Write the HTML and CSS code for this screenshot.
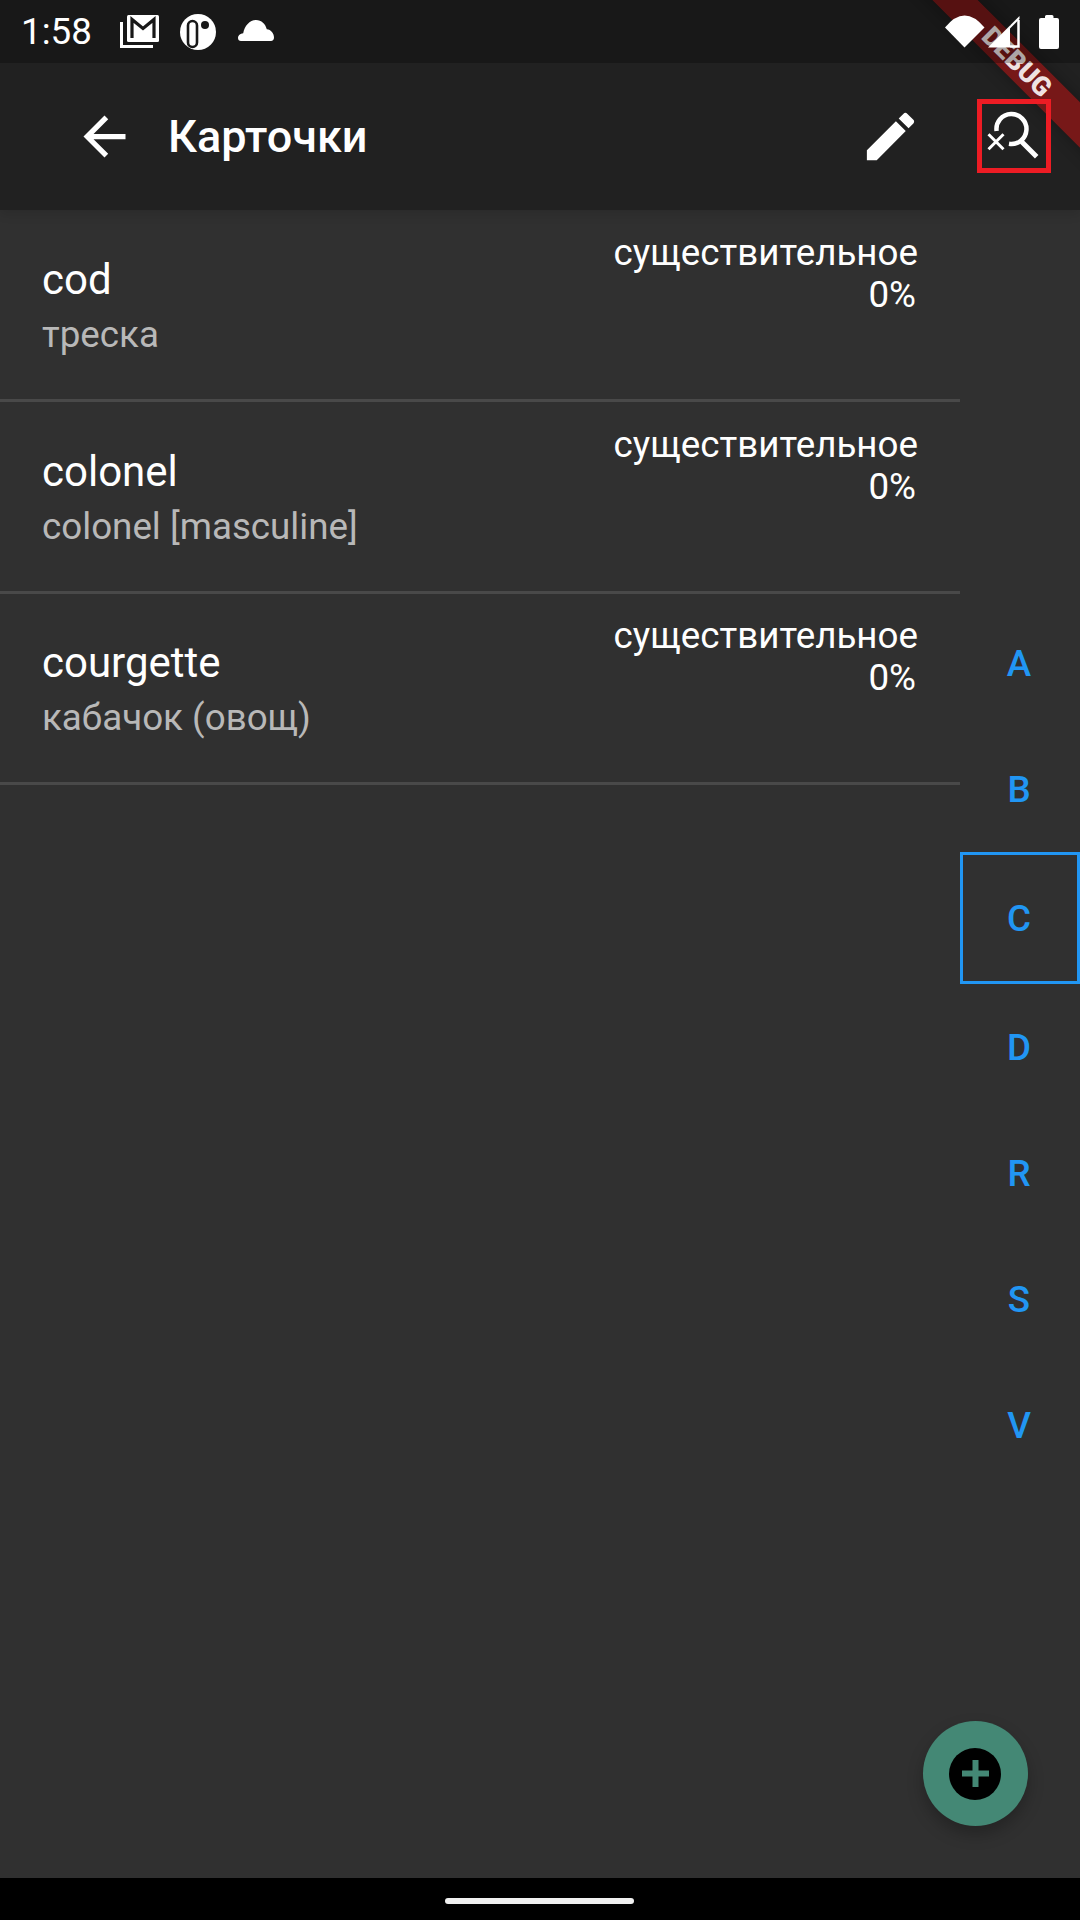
FILE: index.html
```html
<!DOCTYPE html>
<html lang="ru">
<head>
    <meta charset="UTF-8">
    <meta name="viewport" content="width=device-width, initial-scale=1.0">
    <title>Карточки</title>
    <link rel="stylesheet" href="styles.css">
</head>
<body>
    <div class="screen">
        <header class="app-header">
            <div class="debug-ribbon">DEBUG</div>
            <div class="status-bar">
                <span class="status-time">1:58</span>
                <svg class="icon-gmail" width="40" height="34" viewBox="0 0 40 34">
                    <path d="M1.5 7V31.5H33" fill="none" stroke="#fff" stroke-width="3"/>
                    <rect x="7" y="0" width="32" height="27" rx="1.5" fill="#fff"/>
                    <path d="M12 23V4.5L23 13.5L34 4.5V23" fill="none" stroke="#181818" stroke-width="3.2"/>
                </svg>
                <svg class="icon-circle" width="36" height="36" viewBox="0 0 36 36">
                    <circle cx="18" cy="18" r="18" fill="#fff"/>
                    <rect x="8" y="7" width="9" height="26" rx="4.5" fill="#fff" stroke="#181818" stroke-width="2.6"/>
                    <circle cx="25" cy="11" r="4" fill="#181818"/>
                </svg>
                <svg class="icon-cloud" width="36" height="21" viewBox="0 0 36 21">
                    <path d="M3 21C1.2 21 0 19.7 0 18C0 15.4 2.2 13.4 5.2 13.2C6.6 6 11.500 0 18 0C23.500 0 27.500 4 28.800 9.300C33 9.500 36 13.500 36 17.500C36 19.700 34.800 21 33 21Z" fill="#fff"/>
                </svg>
                <svg class="icon-wifi" width="40" height="33" viewBox="0 0 40 33">
                    <path d="M0 12.500Q19.500 -11.500 39.500 12.500L19.500 32.500Z" fill="#fff"/>
                </svg>
                <svg class="icon-signal" width="32" height="32" viewBox="0 0 32 32">
                    <path d="M0 31.500L22 9.500V31.500Z" fill="#fff"/>
                    <path d="M30.500 4V30.500H22" fill="none" stroke="#fff" stroke-width="2.500"/>
                    <path d="M22 9.500L31.500 0V3L22 12.500Z" fill="#fff"/>
                </svg>
                <svg class="icon-battery" width="20" height="34" viewBox="0 0 20 34">
                    <path d="M6 3V1.500Q6 0 7.500 0H13Q14.500 0 14.500 1.500V3H18Q20 3 20 5V32Q20 34 18 34H2Q0 34 0 32V5Q0 3 2 3Z" fill="#fff"/>
                </svg>
            </div>
            <div class="toolbar">
                <svg class="icon-24" viewBox="0 0 24 24"><path d="M20 11H7.83l5.59-5.590L12 4l-8 8 8 8 1.410-1.410L7.830 13H20v-2z" fill="#fff"/></svg>
                <h1 class="toolbar-title">Карточки</h1>
                <svg class="icon-24 icon-edit" viewBox="0 0 24 24"><path d="M3 17.250V21h3.750L17.810 9.940l-3.750-3.750L3 17.250zM20.710 7.040c.39-.39.39-1.020 0-1.410l-2.340-2.340c-.39-.39-1.020-.39-1.410 0l-1.830 1.830 3.750 3.750 1.830-1.830z" fill="#fff"/></svg>
                <div class="search-box">
                    <svg width="64" height="64" viewBox="5 5 64 64">
                        <path d="M19.600 32A15 15 0 1 1 32 44.800" fill="none" stroke="#fff" stroke-width="4.500"/>
                        <path d="M44.700 42.700L59.700 57.700" stroke="#fff" stroke-width="5"/>
                        <path d="M11.500 35.200L26.500 50.200M26.500 35.200L11.500 50.200" stroke="#fff" stroke-width="3"/>
                    </svg>
                </div>
            </div>
        </header>

        <main class="content">
            <div class="card-list">
                <div class="card-row">
                    <div class="card-words">
                        <div class="card-word">cod</div>
                        <div class="card-translation">треска</div>
                    </div>
                    <div class="card-meta">
                        <div>существительное</div>
                        <div class="card-score">0%</div>
                    </div>
                </div>
                <div class="card-row">
                    <div class="card-words">
                        <div class="card-word">colonel</div>
                        <div class="card-translation">colonel [masculine]</div>
                    </div>
                    <div class="card-meta">
                        <div>существительное</div>
                        <div class="card-score">0%</div>
                    </div>
                </div>
                <div class="card-row">
                    <div class="card-words">
                        <div class="card-word">courgette</div>
                        <div class="card-translation">кабачок (овощ)</div>
                    </div>
                    <div class="card-meta">
                        <div>существительное</div>
                        <div class="card-score">0%</div>
                    </div>
                </div>
            </div>
            <div class="alphabet">
                <div class="letter">A</div>
                <div class="letter">B</div>
                <div class="letter letter-active">C</div>
                <div class="letter">D</div>
                <div class="letter">R</div>
                <div class="letter">S</div>
                <div class="letter">V</div>
            </div>
            <div class="fab">
                <div class="fab-inner">
                    <svg width="27" height="27" viewBox="0 0 27 27"><path d="M0 13.500H27M13.500 0V27" stroke="#448875" stroke-width="6"/></svg>
                </div>
            </div>
        </main>

        <div class="nav-bar"><div class="home-indicator"></div></div>
    </div>
</body>
</html>
```

FILE: styles.css
```css
body {
    margin: 0;
    font-family: Roboto, "Noto Sans", sans-serif;
    background-color: #303030;
    color: #fff;
}

.screen {
    position: relative;
    width: 1080px;
    height: 1920px;
    display: flex;
    flex-direction: column;
    overflow: hidden;
}

.app-header {
    position: relative;
    z-index: 2;
    height: 210px;
    background: #212121;
    box-shadow: 0 4px 10px rgba(0, 0, 0, 0.12);
}

.status-bar {
    position: relative;
    z-index: 4;
    height: 63px;
    display: flex;
    align-items: center;
    padding: 0 21px 0 21px;
    background: rgba(0, 0, 0, 0.27);
    box-sizing: border-box;
}

.status-time {
    width: 99px;
    font-size: 36.75px;
    line-height: 63px;
}

.icon-gmail {
    margin-top: 1px;
}

.icon-circle {
    margin-left: 20px;
}

.icon-cloud {
    margin-left: 22px;
    margin-top: -2px;
}

.icon-wifi {
    margin-left: auto;
}

.icon-signal {
    margin-left: 3px;
}

.icon-battery {
    margin-left: 19px;
}

.toolbar {
    position: relative;
    height: 147px;
    display: flex;
    align-items: center;
    padding: 0 29px 0 73px;
}

.icon-24 {
    width: 63px;
    height: 63px;
    flex-shrink: 0;
}

.toolbar-title {
    margin: 0 0 0 32px;
    font-size: 45px;
    font-weight: 500;
}

.icon-edit {
    margin-left: auto;
}

.search-box {
    width: 74px;
    height: 74px;
    margin: 0 0 1px 55px;
    border: 5px solid #ed1c24;
    box-sizing: border-box;
}

.search-box svg {
    display: block;
}

.debug-ribbon {
    position: absolute;
    left: 817px;
    top: 46px;
    width: 400px;
    height: 32px;
    background: rgba(160, 20, 20, 0.68);
    box-shadow: 0 0 16px rgba(0, 0, 0, 0.3);
    color: rgba(255, 255, 255, 0.9);
    font-size: 26.8px;
    font-weight: 900;
    line-height: 32px;
    text-align: center;
    transform: rotate(45deg);
}

.content {
    position: relative;
    flex: 1;
    display: flex;
}

.card-list {
    width: 960px;
}

.card-row {
    height: 192px;
    display: flex;
    justify-content: space-between;
    padding: 0 42px;
    border-bottom: 3px solid #494949;
    box-sizing: border-box;
}

.card-row:last-child {
    margin-top: -1px;
}

.card-words {
    padding-top: 41px;
}

.card-word {
    font-size: 42px;
    line-height: 58px;
}

.card-translation {
    font-size: 36.75px;
    line-height: 51px;
    color: #b8b8b8;
}

.card-meta {
    padding-top: 21px;
    font-size: 36.75px;
    line-height: 43px;
    text-align: right;
}

.card-score {
    margin-top: -1px;
    padding-right: 2px;
}

.alphabet {
    width: 120px;
    display: flex;
    flex-direction: column;
    justify-content: center;
}

.letter {
    height: 126px;
    display: flex;
    align-items: center;
    justify-content: center;
    padding-right: 2px;
    color: #2196f3;
    font-size: 36.75px;
    font-weight: 500;
}

.letter-active {
    height: 132px;
    border: 3px solid #2196f3;
    box-sizing: border-box;
}

.fab {
    position: absolute;
    right: 52.5px;
    bottom: 52px;
    width: 105px;
    height: 105px;
    display: flex;
    align-items: center;
    justify-content: center;
    background: #448875;
    border-radius: 50%;
    box-shadow: 0 8px 16px rgba(0, 0, 0, 0.25);
}

.fab-inner {
    width: 52px;
    height: 52px;
    display: flex;
    align-items: center;
    justify-content: center;
    background: #000;
    border-radius: 50%;
}

.nav-bar {
    height: 42px;
    display: flex;
    justify-content: center;
    padding-top: 20px;
    background: #000;
    box-sizing: border-box;
}

.home-indicator {
    width: 189px;
    height: 6px;
    margin-right: 1px;
    background: #f0f0f0;
    border-radius: 3px;
}
```
